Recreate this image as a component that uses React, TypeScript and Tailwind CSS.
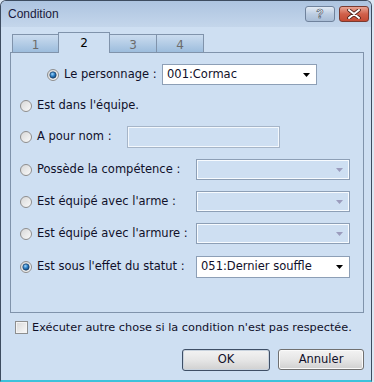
import React from "react";

const FONT = { fontFamily: '"DejaVu Sans", Verdana, sans-serif' };

function Radio({ checked }: { checked?: boolean }) {
  const id = checked ? "rc" : "ru";
  return (
    <svg width="12" height="12" viewBox="0 0 12 12" className="shrink-0">
      <defs>
        <linearGradient id={id + "bg"} x1="0" y1="0" x2="1" y2="1">
          <stop offset="0" stopColor="#d6d6d6" />
          <stop offset="1" stopColor="#fbfbfb" />
        </linearGradient>
        <radialGradient id={id + "dot"} cx="0.4" cy="0.35" r="0.7">
          <stop offset="0" stopColor="#9fd6ff" />
          <stop offset="0.5" stopColor="#2d7fc4" />
          <stop offset="1" stopColor="#0f3f73" />
        </radialGradient>
      </defs>
      <circle cx="6" cy="6" r="5.5" fill={`url(#${id}bg)`} stroke="#8d8d8d" strokeWidth="1" />
      {checked && <circle cx="6" cy="6" r="3.2" fill={`url(#${id}dot)`} stroke="#1b3f66" strokeWidth="0.7" />}
    </svg>
  );
}

function Arrow({ disabled }: { disabled?: boolean }) {
  return (
    <svg width="7" height="4" viewBox="0 0 7 4" className="shrink-0">
      <polygon points="0,0 7,0 3.5,4" fill={disabled ? "#9b9cbd" : "#000000"} />
    </svg>
  );
}

function Combo({ value, width, disabled, h = 21 }: { value?: string; width: number; disabled?: boolean; h?: number }) {
  return (
    <div
      style={{ width, height: h }}
      className={
        disabled
          ? "flex items-center justify-between border border-[#8d9fb6] bg-[#cedff2] shadow-[inset_0_0_0_1px_#f7fbff] pl-[4px] pr-[6px]"
          : "flex items-center justify-between border border-[#8d9fb6] bg-white pl-[4px] pr-[6px]"
      }
    >
      <span className="text-[11.5px] text-[#10102a] leading-none">{value ?? ""}</span>
      <Arrow disabled={disabled} />
    </div>
  );
}

function Row({ children, mt, pl = 9 }: { children: React.ReactNode; mt: number; pl?: number }) {
  return (
    <div className="flex items-center" style={{ marginTop: mt, paddingLeft: pl }}>
      {children}
    </div>
  );
}

function Label({ text, w }: { text: string; w?: number }) {
  return (
    <span
      className="ml-[5px] text-[11.5px] text-[#10102a] whitespace-nowrap leading-none"
      style={w ? { width: w, display: "inline-block" } : undefined}
    >
      {text}
    </span>
  );
}

export default function App() {
  return (
    <div className="w-[374px] h-[382px] bg-[#dbe7f4] overflow-hidden" style={FONT}>
      <div className="w-[372px] h-[382px] border-l border-r border-t border-[#3d4c60] border-b-2 border-b-[#3cc2db] rounded-t-[6px] bg-[#cedff2] flex flex-col">
        {/* Title bar */}
        <div className="h-[26px] flex items-center justify-between bg-gradient-to-b from-[#adc4e0] to-[#c4d6eb] rounded-t-[5px]">
          <span
            className="pl-[7px] text-[12px] text-[#1a1a3c]"
            style={{ fontFamily: '"Liberation Sans", Arial, sans-serif' }}
          >
            Condition
          </span>
          <div className="flex items-center gap-[4px] pr-[2px] self-start mt-[5px]">
            <div className="w-[30px] h-[16px] rounded-[3px] border border-[#6f829c] bg-gradient-to-b from-[#e3ebf5] via-[#bccde2] to-[#a9bdd6] flex items-center justify-center">
              <span
                className="text-[12px] font-bold text-white leading-none"
                style={{ WebkitTextStroke: "0.6px #3d4b5e", fontFamily: '"Liberation Sans", Arial, sans-serif' }}
              >
                ?
              </span>
            </div>
            <div className="w-[30px] h-[16px] rounded-[3px] border border-[#7a3a30] bg-gradient-to-b from-[#e8a595] via-[#d0604a] to-[#c44a33] flex items-center justify-center">
              <svg width="14" height="10" viewBox="0 0 14 10">
                <path d="M2 1 L12 9 M12 1 L2 9" stroke="#4b2019" strokeWidth="3.6" strokeLinecap="round" />
                <path d="M2 1 L12 9 M12 1 L2 9" stroke="#ffffff" strokeWidth="2" strokeLinecap="round" />
              </svg>
            </div>
          </div>
        </div>

        {/* Tabs */}
        <div className="mt-[5px] h-[20px] pl-[11px] flex items-end relative z-10">
          {[
            { t: "1", w: 47 },
            { t: "2", w: 52, sel: true },
            { t: "3", w: 48 },
            { t: "4", w: 48 },
          ].map((tab, i) =>
            tab.sel ? (
              <div
                key={i}
                style={{ width: tab.w }}
                className="-ml-px h-[21px] -mb-px border border-b-0 border-[#8093ab] bg-[#cedff2] flex items-center justify-center text-[12px] text-[#000] pb-[1px]"
              >
                {tab.t}
              </div>
            ) : (
              <div
                key={i}
                style={{ width: tab.w, marginLeft: i === 0 ? 0 : -1 }}
                className="h-[18px] border border-b-0 border-[#8093ab] bg-gradient-to-b from-[#cbdcef] to-[#9dbddd] flex items-center justify-center text-[12px] text-[#6c6c6c] pt-[2px]"
              >
                {tab.t}
              </div>
            )
          )}
        </div>

        {/* Panel */}
        <div className="ml-[9px] w-[354px] h-[261px] border border-[#8093ab] bg-[#cedff2] flex flex-col">
          <Row mt={11} pl={36}>
            <Radio checked />
            <Label text="Le personnage :" w={98} />
            <Combo value="001:Cormac" width={155} />
          </Row>
          <Row mt={10}>
            <div className="h-[21px] flex items-center">
              <Radio />
              <Label text="Est dans l'équipe." />
            </div>
          </Row>
          <Row mt={10}>
            <Radio />
            <Label text="A pour nom :" w={90} />
            <div className="w-[153px] h-[22px] border border-[#a6b5c8] bg-[#cedff2] shadow-[inset_0_0_0_1px_#f3f8fd]" />
          </Row>
          <Row mt={11}>
            <Radio />
            <Label text="Possède la compétence :" w={159} />
            <Combo width={154} disabled />
          </Row>
          <Row mt={11}>
            <Radio />
            <Label text="Est équipé avec l'arme :" w={159} />
            <Combo width={154} disabled />
          </Row>
          <Row mt={11}>
            <Radio />
            <Label text="Est équipé avec l'armure :" w={159} />
            <Combo width={154} disabled />
          </Row>
          <Row mt={12}>
            <Radio checked />
            <Label text="Est sous l'effet du statut :" w={159} />
            <Combo value="051:Dernier souffle" width={154} h={22} />
          </Row>
        </div>

        {/* Checkbox */}
        <div className="mt-[8px] pl-[14px] flex items-center h-[13px]">
          <div className="w-[13px] h-[13px] border border-[#8e8f8f] bg-gradient-to-br from-[#d9d9d9] to-[#fafafa] shadow-[inset_0_0_0_1px_#f4f4f4]" />
          <span className="ml-[4px] text-[11.3px] text-[#10102a] whitespace-nowrap leading-none">
            Exécuter autre chose si la condition n'est pas respectée.
          </span>
        </div>

        {/* Buttons */}
        <div className="mt-[15px] pl-[181px] flex gap-[8px]">
          <button className="w-[88px] h-[22px] rounded-[3px] border border-[#3f4f66] bg-gradient-to-b from-[#f3f3f3] via-[#e6e6e6] to-[#d0d0d0] shadow-[inset_0_0_0_1px_#c9d3de] text-[11.5px] text-[#10102a]">
            OK
          </button>
          <button className="w-[86px] h-[21px] rounded-[3px] border border-[#707070] bg-gradient-to-b from-[#f3f3f3] via-[#e6e6e6] to-[#d0d0d0] shadow-[inset_0_0_0_1px_#fafafa] text-[11.5px] text-[#10102a]">
            Annuler
          </button>
        </div>
      </div>
    </div>
  );
}
